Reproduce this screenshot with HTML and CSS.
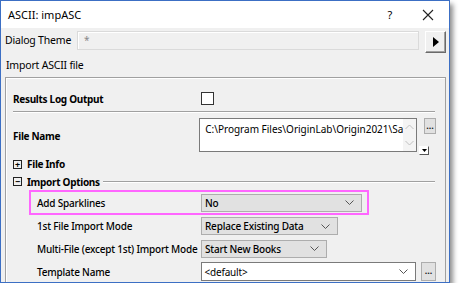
FILE: index.html
```html
<!DOCTYPE html>
<html>
<head>
    <meta charset="UTF-8">
    <title>ASCII: impASC</title>
    <link rel="stylesheet" href="styles.css">
</head>
<body>
<div class="window">
    <div class="titlebar">
        <span class="title">ASCII: impASC</span>
        <span class="help">?</span>
        <svg class="close" width="12" height="12" viewBox="0 0 12 12">
            <path d="M1 1 L11 11 M11 1 L1 11" stroke="#222" stroke-width="1.1" fill="none"/>
        </svg>
    </div>
    <div class="content">
        <div class="theme-row">
            <span class="theme-label">Dialog Theme</span>
            <div class="theme-input">*</div>
            <div class="arrow-btn">
                <svg width="8" height="10" viewBox="0 0 8 10"><path d="M1 0 L7 5 L1 10 Z" fill="#000"/></svg>
            </div>
        </div>
        <div class="caption">Import ASCII file</div>

        <div class="group">
            <div class="row row-log">
                <span class="label bold">Results Log Output</span>
                <span class="checkbox"></span>
            </div>
            <div class="etched"></div>
            <div class="row row-file">
                <span class="label bold">File Name</span>
                <div class="file-box">
                    <span class="file-text">C:\Program Files\OriginLab\Origin2021\Sa</span>
                    <div class="scroll">
                        <svg width="9" height="6" viewBox="0 0 9 6"><path d="M0.5 5 L4.5 1 L8.5 5" stroke="#c0c0c0" fill="none"/></svg>
                        <svg width="9" height="6" viewBox="0 0 9 6"><path d="M0.5 1 L4.5 5 L8.5 1" stroke="#c0c0c0" fill="none"/></svg>
                    </div>
                </div>
                <div class="file-side">
                    <div class="dots-btn small">...</div>
                    <div class="drop-mini">
                        <svg width="5" height="3" viewBox="0 0 5 3"><path d="M0 0 L5 0 L2.5 3 Z" fill="#000"/></svg>
                    </div>
                </div>
            </div>
            <div class="tree-item">
                <span class="box-icon">+</span>
                <span class="bold">File Info</span>
            </div>
            <div class="tree-item open">
                <span class="box-icon">&minus;</span>
                <span class="bold">Import Options</span>
                <span class="head-line"></span>
            </div>

            <div class="highlight">
                <span class="sublabel">Add Sparklines</span>
                <div class="select wide">
                    <span>No</span>
                    <svg width="9" height="5" viewBox="0 0 9 5"><path d="M0.5 0.5 L4.5 4.5 L8.5 0.5" stroke="#555" fill="none"/></svg>
                </div>
            </div>
            <div class="subrow first">
                <span class="sublabel">1st File Import Mode</span>
                <div class="select mode">
                    <span>Replace Existing Data</span>
                    <svg width="9" height="5" viewBox="0 0 9 5"><path d="M0.5 0.5 L4.5 4.5 L8.5 0.5" stroke="#555" fill="none"/></svg>
                </div>
            </div>
            <div class="subrow">
                <span class="sublabel">Multi-File (except 1st) Import Mode</span>
                <div class="select books">
                    <span>Start New Books</span>
                    <svg width="9" height="5" viewBox="0 0 9 5"><path d="M0.5 0.5 L4.5 4.5 L8.5 0.5" stroke="#555" fill="none"/></svg>
                </div>
            </div>
            <div class="subrow">
                <span class="sublabel">Template Name</span>
                <div class="combo">
                    <span>&lt;default&gt;</span>
                    <svg width="9" height="5" viewBox="0 0 9 5"><path d="M0.5 0.5 L4.5 4.5 L8.5 0.5" stroke="#555" fill="none"/></svg>
                </div>
                <div class="dots-btn tall">...</div>
            </div>
        </div>
    </div>
</div>
</body>
</html>
```

FILE: styles.css
```css
* {
    margin: 0;
    padding: 0;
    box-sizing: border-box;
}

body {
    background-color: #fff;
    font-family: "Noto Sans", "DejaVu Sans", sans-serif;
    font-size: 10px;
    letter-spacing: -0.2px;
    color: #000;
}

/*对话框外框*/
.window {
    width: 450px;
    height: 283px;
    border: 1px solid #3c6fc4;
    background-color: #f0f0f0;
    box-shadow: 3px 4px 5px rgba(0, 0, 0, 0.45);
    overflow: hidden;
}

.titlebar {
    height: 27px;
    background-color: #fff;
    display: flex;
    align-items: center;
    padding-left: 7px;
}

.title {
    font-size: 11px;
    letter-spacing: 0;
    flex: 1;
}

.help {
    font-size: 11px;
    margin-right: 30px;
}

.close {
    margin-right: 15px;
}

.content {
    padding: 3px 3px 0 4px;
}

.theme-row {
    display: flex;
    align-items: flex-start;
    height: 23px;
}

.theme-label {
    width: 72px;
    line-height: 19px;
    font-size: 10.5px;
}

.theme-input {
    width: 342px;
    height: 19px;
    border: 1px solid #dadada;
    box-shadow: inset 1px 1px 0 #fff;
    color: #888;
    padding-left: 6px;
    line-height: 17px;
}

.arrow-btn {
    width: 21px;
    height: 22px;
    margin-left: 6px;
    border: 1px solid;
    border-color: #fff #6a6a6a #6a6a6a #fff;
    box-shadow: inset -1px -1px 0 #a0a0a0;
    display: flex;
    align-items: center;
    justify-content: center;
}

.caption {
    height: 23px;
    line-height: 22px;
    padding-left: 1px;
    font-size: 10.5px;
}

/*分组框*/
.group {
    width: 441px;
    height: 220px;
    border: 1px solid #a0a0a0;
    box-shadow: inset 1px 1px 0 #fff;
    padding: 10px 9px 0 7px;
}

.bold {
    font-weight: bold;
    letter-spacing: -0.3px;
}

.row {
    display: flex;
}

.label {
    width: 188px;
}

.row-log {
    height: 21px;
    align-items: center;
}

.checkbox {
    width: 13px;
    height: 13px;
    border: 1px solid #333;
    background-color: #fff;
}

.etched {
    height: 2px;
    margin: 2px 1px 0 0;
    border-top: 1px solid #a0a0a0;
    border-bottom: 1px solid #fff;
}

.row-file {
    height: 42px;
    padding-top: 5px;
}

.row-file .label {
    line-height: 36px;
}

.file-box {
    width: 218px;
    height: 34px;
    border: 1px solid #7a7a7a;
    background-color: #fff;
    display: flex;
}

.file-text {
    flex: 1;
    padding: 3px 0 0 5px;
    white-space: nowrap;
    overflow: hidden;
    letter-spacing: 0;
}

.scroll {
    width: 13px;
    background-color: #f4f4f4;
    display: flex;
    flex-direction: column;
    justify-content: space-around;
    align-items: center;
}

.file-side {
    width: 19px;
    display: flex;
    flex-direction: column;
    justify-content: space-between;
    align-items: flex-end;
}

.dots-btn {
    background-color: #e1e1e1;
    border: 1px solid #adadad;
    text-align: center;
    font-weight: bold;
    font-size: 9px;
    letter-spacing: 0;
    color: #1a1a1a;
}

.dots-btn.small {
    width: 12px;
    height: 16px;
    line-height: 13px;
}

.drop-mini {
    width: 10px;
    height: 9px;
    margin-right: 7px;
    background-color: #fff;
    border: 1px solid;
    border-color: #fff #555 #555 #fff;
    display: flex;
    align-items: center;
    justify-content: center;
}

.tree-item {
    display: flex;
    align-items: center;
    height: 18px;
}

.tree-item.open {
    height: 17px;
}

.box-icon {
    width: 9px;
    height: 9px;
    border: 1px solid #222;
    font-size: 9px;
    line-height: 7px;
    text-align: center;
    margin-right: 5px;
    font-weight: bold;
    letter-spacing: 0;
}

.head-line {
    flex: 1;
    height: 2px;
    margin-left: 3px;
    margin-right: 1px;
    border-top: 1px solid #a0a0a0;
    border-bottom: 1px solid #fff;
}

/*高亮框*/
.highlight {
    display: flex;
    align-items: center;
    width: 340px;
    height: 25px;
    margin-left: 16px;
    border: 2px solid #ff66ff;
    padding-left: 6px;
}

.sublabel {
    width: 164px;
    font-weight: 500;
}

.subrow {
    display: flex;
    align-items: center;
    height: 23px;
    padding-left: 24px;
}

.subrow.first {
    height: 22px;
}

.select {
    height: 18px;
    background-color: #e1e1e1;
    border: 1px solid #adadad;
    display: flex;
    align-items: center;
    justify-content: space-between;
    padding: 0 7px 0 3px;
    font-weight: 500;
}

.select.wide {
    width: 161px;
}

.select.mode {
    width: 137px;
}

.select.books {
    width: 126px;
}

.combo {
    width: 216px;
    height: 19px;
    background-color: #fff;
    border: 1px solid #7a7a7a;
    display: flex;
    align-items: center;
    justify-content: space-between;
    padding: 0 7px 0 3px;
}

.dots-btn.tall {
    width: 15px;
    height: 19px;
    margin-left: 5px;
    line-height: 16px;
}
```
